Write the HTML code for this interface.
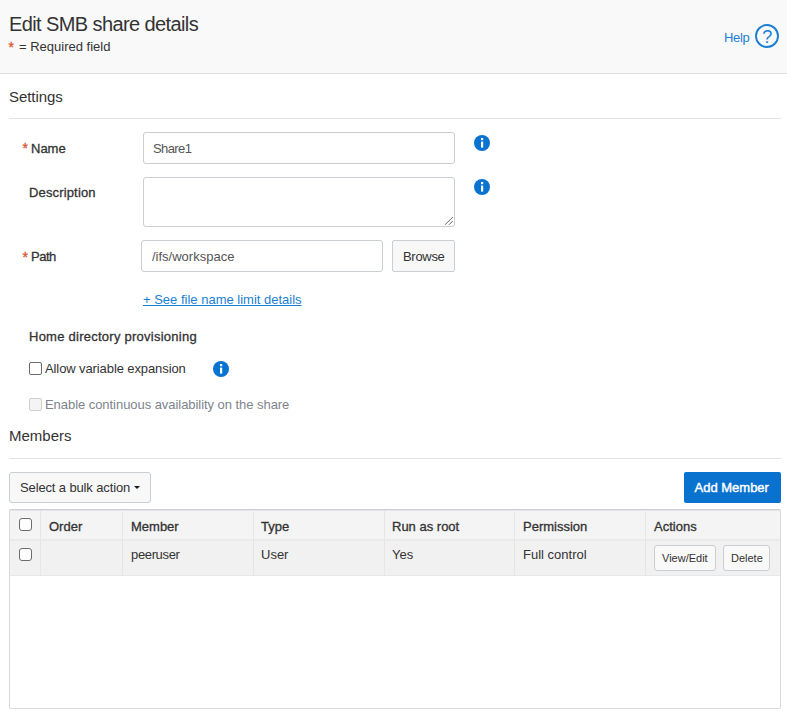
<!DOCTYPE html>
<html><head><meta charset="utf-8">
<style>
*{box-sizing:border-box;margin:0;padding:0}
html,body{width:787px;height:717px;overflow:hidden;background:#fff;font-family:"Liberation Sans",sans-serif;color:#333}
.t{position:absolute;white-space:nowrap;line-height:1}
#hdr{position:absolute;left:0;top:0;width:787px;height:74px;background:#f9f9f9;border-bottom:1px solid #dde0e3}
.star{color:#d9532c;-webkit-text-stroke:0.3px #d9532c}
.sec{font-size:15px;color:#333}
.hr{position:absolute;height:1px;background:#e3e3e3}
.lbl{font-size:13px;font-weight:normal;color:#333;-webkit-text-stroke:0.3px #333}
.box{position:absolute;border:1px solid #c9ced3;border-radius:3px;background:#fff}
.info{position:absolute}
.btn{position:absolute;border:1px solid #c9ced3;border-radius:2px;background:#f8f8f8}
.cb{position:absolute;width:13px;height:13px;border:1px solid #6b6b6b;border-radius:2px;background:#fff}
.v{position:absolute;top:511px;width:1px;height:65px;background:#e6e6e6}
</style></head><body>
<div id="hdr"></div>
<div class="t" style="left:9px;top:13.5px;font-size:20px;letter-spacing:-0.6px;color:#333">Edit SMB share details</div>
<div class="t star" style="left:8.5px;top:40px;font-size:14px">*</div>
<div class="t" style="left:19px;top:40px;font-size:13px;color:#333">= Required field</div>
<div class="t" style="left:724px;top:31px;font-size:13px;color:#1b7fd3;letter-spacing:-0.3px">Help</div>
<svg class="t" style="left:755px;top:24px" width="24" height="24" viewBox="0 0 24 24"><circle cx="12" cy="12" r="11" fill="none" stroke="#1b7fd3" stroke-width="1.9"/><text x="12.3" y="18.6" text-anchor="middle" font-family="Liberation Sans" font-size="18" fill="#1b7fd3">?</text></svg>

<div class="t sec" style="left:9px;top:89px;letter-spacing:-0.05px">Settings</div>
<div class="hr" style="left:9px;top:118px;width:772px"></div>

<div class="t star" style="left:22.5px;top:141px;font-size:14px">*</div>
<div class="t lbl" style="left:31px;top:142px">Name</div>
<div class="box" style="left:143px;top:132px;width:312px;height:32px"></div>
<div class="t" style="left:153px;top:142px;font-size:13px;color:#555;letter-spacing:-0.6px">Share1</div>
<svg class="info" style="left:474px;top:135px" width="16" height="16" viewBox="0 0 16 16"><circle cx="8" cy="8" r="8" fill="#0873d0"/><rect x="7" y="3" width="2.2" height="2.2" fill="#fff"/><rect x="7" y="6.6" width="2.2" height="6" fill="#fff"/></svg>

<div class="t lbl" style="left:29px;top:186px;letter-spacing:0.15px">Description</div>
<div class="box" style="left:143px;top:177px;width:312px;height:50px"></div>
<svg class="t" style="left:443px;top:215px" width="10" height="10" viewBox="0 0 10 10"><path d="M2 9.8L9.8 2M6 9.8L9.8 6" stroke="#666" stroke-width="1"/></svg>
<svg class="info" style="left:474px;top:179px" width="16" height="16" viewBox="0 0 16 16"><circle cx="8" cy="8" r="8" fill="#0873d0"/><rect x="7" y="3" width="2.2" height="2.2" fill="#fff"/><rect x="7" y="6.6" width="2.2" height="6" fill="#fff"/></svg>

<div class="t star" style="left:22.5px;top:249.5px;font-size:14px">*</div>
<div class="t lbl" style="left:31px;top:250px;letter-spacing:-0.5px">Path</div>
<div class="box" style="left:141px;top:240px;width:242px;height:32px"></div>
<div class="t" style="left:152px;top:250px;font-size:13px;color:#555">/ifs/workspace</div>
<div class="btn" style="left:392px;top:240px;width:63px;height:32px;border-radius:2px"></div>
<div class="t" style="left:403px;top:250px;font-size:13px;color:#333;letter-spacing:-0.3px">Browse</div>

<div class="t" style="left:143px;top:293px;font-size:13px;color:#1b7fd3;text-decoration:underline">+ See file name limit details</div>

<div class="t lbl" style="left:29px;top:330px;letter-spacing:0.25px">Home directory provisioning</div>
<div class="cb" style="left:29px;top:362px"></div>
<div class="t" style="left:45px;top:362px;font-size:13px;color:#333;letter-spacing:-0.1px">Allow variable expansion</div>
<svg class="info" style="left:213px;top:361px" width="16" height="16" viewBox="0 0 16 16"><circle cx="8" cy="8" r="8" fill="#0873d0"/><rect x="7" y="3" width="2.2" height="2.2" fill="#fff"/><rect x="7" y="6.6" width="2.2" height="6" fill="#fff"/></svg>
<div class="cb" style="left:29px;top:398px;border-color:#cfcfcf;background:#f4f4f4"></div>
<div class="t" style="left:45px;top:398px;font-size:13px;color:#7d848c;letter-spacing:-0.05px">Enable continuous availability on the share</div>

<div class="t sec" style="left:9px;top:428px">Members</div>
<div class="hr" style="left:9px;top:458px;width:772px"></div>

<div class="btn" style="left:9px;top:472px;width:142px;height:31px;border-radius:3px"></div>
<div class="t" style="left:20px;top:481px;font-size:13px;color:#333;letter-spacing:-0.13px">Select a bulk action</div>
<svg class="t" style="left:134px;top:486px" width="6" height="3" viewBox="0 0 6 3"><path d="M0 0H6L3 3Z" fill="#1a1a1a"/></svg>
<div style="position:absolute;left:684px;top:472px;width:97px;height:31px;background:#0972cf;border-radius:2px"></div>
<div class="t" style="left:694.5px;top:481px;font-size:13px;color:#fff;-webkit-text-stroke:0.4px #fff">Add Member</div>

<!-- table -->
<div style="position:absolute;left:9px;top:509px;width:772px;height:200px;border:1px solid #d9d9d9;border-top:1px solid #cdd1d5;border-radius:2px;background:#fff"></div>
<div style="position:absolute;left:10px;top:510px;width:770px;height:1px;background:#e2e4e6"></div>
<div style="position:absolute;left:10px;top:511px;width:770px;height:28px;background:#f4f4f4"></div>
<div style="position:absolute;left:10px;top:539px;width:770px;height:2px;background:#eaeaea"></div>
<div style="position:absolute;left:10px;top:541px;width:770px;height:34px;background:#f1f1f1"></div>
<div style="position:absolute;left:10px;top:575px;width:770px;height:1px;background:#e6e7e8"></div>
<div class="v" style="left:40px"></div>
<div class="v" style="left:122px"></div>
<div class="v" style="left:253px"></div>
<div class="v" style="left:384px"></div>
<div class="v" style="left:514px"></div>
<div class="v" style="left:645px"></div>

<div class="cb" style="left:19px;top:518px;border-radius:3px"></div>
<div class="cb" style="left:19px;top:548px;border-radius:3px"></div>

<div class="t lbl" style="left:49px;top:520px">Order</div>
<div class="t lbl" style="left:131px;top:520px">Member</div>
<div class="t lbl" style="left:261px;top:520px">Type</div>
<div class="t lbl" style="left:392px;top:520px">Run as root</div>
<div class="t lbl" style="left:523px;top:520px">Permission</div>
<div class="t lbl" style="left:654px;top:520px">Actions</div>

<div class="t" style="left:131px;top:548px;font-size:13px;color:#333;letter-spacing:-0.35px">peeruser</div>
<div class="t" style="left:261px;top:548px;font-size:13px;color:#333">User</div>
<div class="t" style="left:392px;top:548px;font-size:13px;color:#333">Yes</div>
<div class="t" style="left:523px;top:548px;font-size:13px;color:#333">Full control</div>

<div class="btn" style="left:654px;top:545px;width:62px;height:26px;background:#f9f9f9;border-radius:3px"></div>
<div class="t" style="left:662px;top:553px;font-size:11px;color:#333">View/Edit</div>
<div class="btn" style="left:723px;top:545px;width:47px;height:26px;background:#f9f9f9;border-radius:3px"></div>
<div class="t" style="left:731px;top:553px;font-size:11px;color:#333">Delete</div>
</body></html>
